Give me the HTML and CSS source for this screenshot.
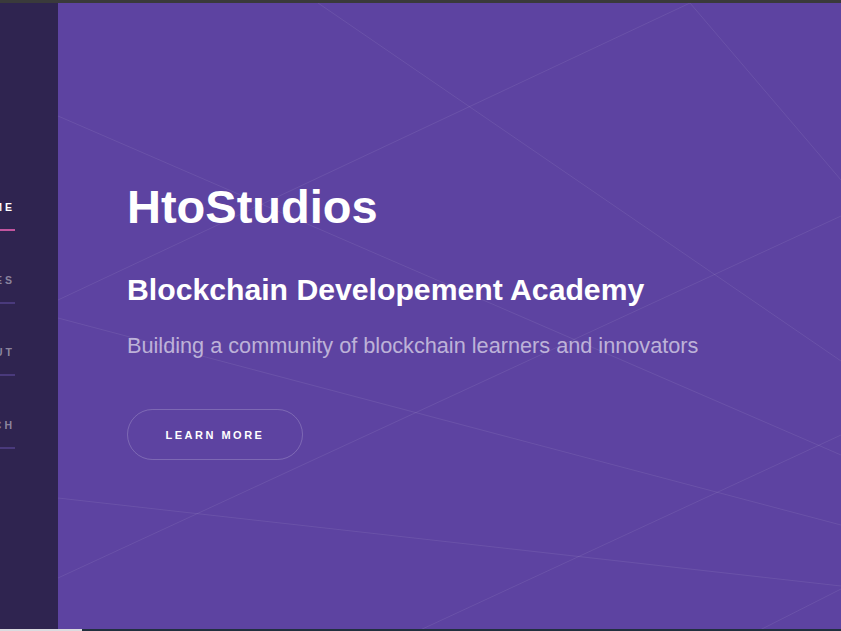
FILE: index.html
```html
<!DOCTYPE html>
<html lang="en">
<head>
<meta charset="utf-8">
<title>HtoStudios</title>
<link rel="stylesheet" href="styles.css">
</head>
<body>
<div class="page">
  <div class="topbar"></div>
  <div class="hero">
    <aside class="sidebar">
      <nav class="nav">
        <a class="nav-item active" href="#">Home</a>
        <a class="nav-item" href="#">Courses</a>
        <a class="nav-item" href="#">About</a>
        <a class="nav-item" href="#">Research</a>
      </nav>
    </aside>
    <main class="main">
      <svg class="bg-lines" viewBox="58 3 783 626" preserveAspectRatio="none" aria-hidden="true">
        <g stroke="rgba(255,255,255,0.08)" stroke-width="1" fill="none">
          <line x1="318" y1="3" x2="841" y2="361"/>
          <line x1="690" y1="3" x2="841" y2="180"/>
          <line x1="690" y1="3" x2="58" y2="300"/>
          <line x1="58" y1="116" x2="841" y2="455"/>
          <line x1="58" y1="318" x2="841" y2="525"/>
          <line x1="418" y1="631" x2="841" y2="435"/>
          <line x1="58" y1="498" x2="841" y2="586"/>
          <line x1="758" y1="631" x2="841" y2="589"/>
          <line x1="58" y1="578" x2="841" y2="216"/>
        </g>
      </svg>
      <div class="content">
        <h1 class="title">HtoStudios</h1>
        <h2 class="subtitle">Blockchain Developement Academy</h2>
        <p class="lead">Building a community of blockchain learners and innovators</p>
        <a class="btn" href="#">Learn More</a>
      </div>
    </main>
  </div>
  <div class="bottombar">
    <div class="bottom-left"></div>
    <div class="bottom-right"></div>
  </div>
</div>
</body>
</html>
```

FILE: styles.css
```css
html, body {
  margin: 0;
  padding: 0;
  width: 841px;
  height: 631px;
  overflow: hidden;
  font-family: "Liberation Sans", Arial, sans-serif;
}

.page {
  display: flex;
  flex-direction: column;
  width: 841px;
  height: 631px;
}

.topbar {
  height: 3px;
  background: #3a3a3b;
  flex-shrink: 0;
}

.hero {
  display: flex;
  flex: 1;
  min-height: 0;
}

.sidebar {
  width: 58px;
  flex-shrink: 0;
  background: #2f2450;
  display: flex;
  justify-content: flex-end;
  align-items: flex-start;
  padding: 197px 43px 0 0;
  box-sizing: border-box;
  overflow: hidden;
}

.nav {
  width: 120px;
  flex-shrink: 0;
  display: flex;
  flex-direction: column;
  gap: 41.6px;
}

.nav-item {
  display: block;
  text-align: right;
  text-decoration: none;
  text-transform: uppercase;
  font-size: 10.5px;
  font-weight: bold;
  letter-spacing: 3px;
  line-height: 14px;
  padding-bottom: 15px;
  border-bottom: 2px solid #4a3a7c;
  color: rgba(255, 255, 255, 0.45);
}

.nav-item.active {
  color: #ffffff;
  border-bottom-color: #c2559f;
}

.main {
  flex: 1;
  position: relative;
  background: #5d43a1;
  overflow: hidden;
}

.bg-lines {
  position: absolute;
  left: 0;
  top: 0;
  width: 100%;
  height: 100%;
}

.content {
  position: relative;
  display: flex;
  flex-direction: column;
  align-items: flex-start;
  padding: 175.5px 0 0 69px;
}

.title {
  margin: 0;
  font-size: 47px;
  line-height: 1.2;
  font-weight: bold;
  color: #ffffff;
}

.subtitle {
  margin: 37px 0 0;
  font-size: 30.2px;
  line-height: 1.2;
  font-weight: bold;
  color: #ffffff;
}

.lead {
  margin: 22px 0 0;
  font-size: 21.7px;
  line-height: 1.5;
  color: rgba(255, 255, 255, 0.6);
}

.btn {
  margin-top: 46.5px;
  width: 176px;
  height: 51px;
  box-sizing: border-box;
  display: flex;
  align-items: center;
  justify-content: center;
  border: 1px solid rgba(255, 255, 255, 0.2);
  border-radius: 26px;
  color: #ffffff;
  text-decoration: none;
  text-transform: uppercase;
  font-size: 11px;
  font-weight: bold;
  letter-spacing: 2.5px;
}

.bottombar {
  height: 2px;
  display: flex;
  flex-shrink: 0;
}

.bottom-left {
  width: 82px;
  background: #dcdbe0;
}

.bottom-right {
  flex: 1;
  background: #22303f;
}
```
